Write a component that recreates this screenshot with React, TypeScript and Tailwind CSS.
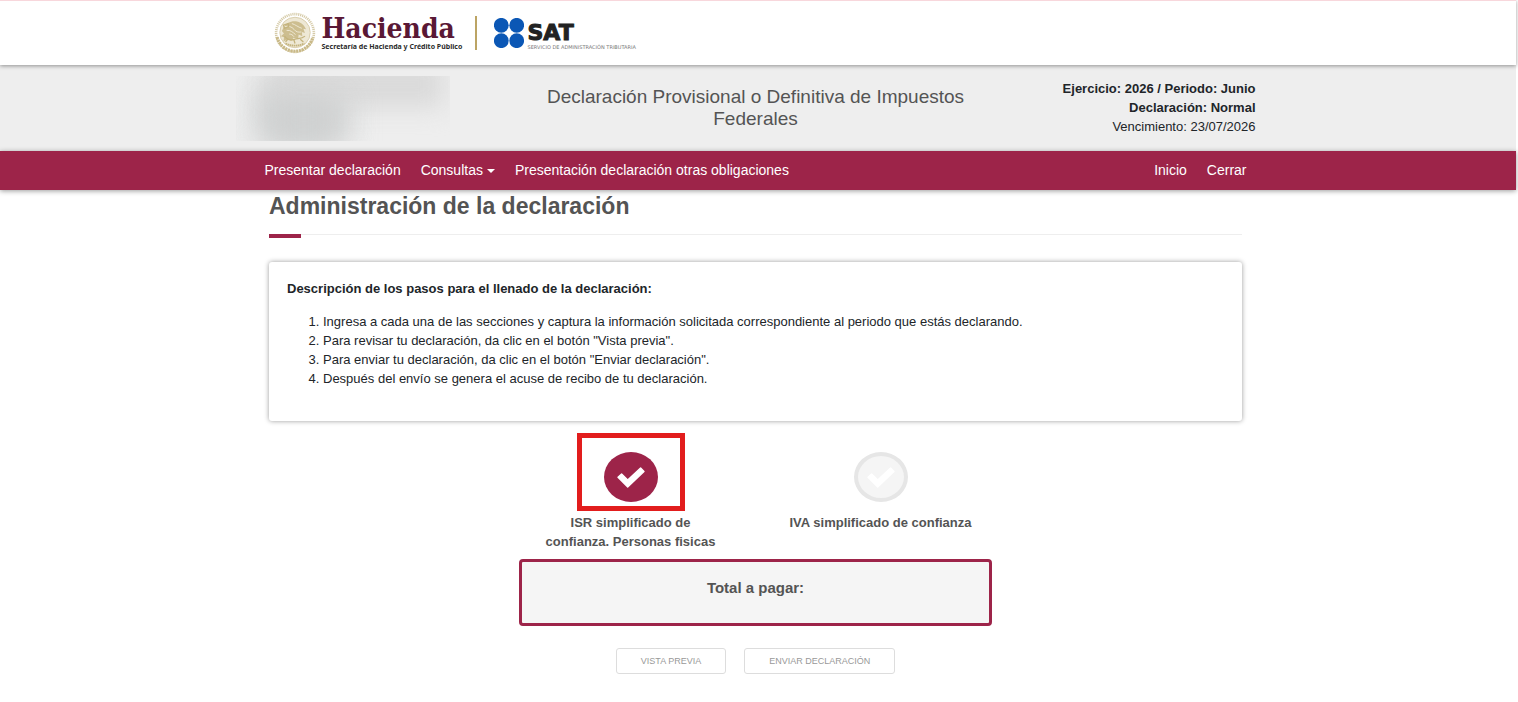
interface Step {
  id: string
  label: string
  active: boolean
}

const instructions = [
  "Ingresa a cada una de las secciones y captura la información solicitada correspondiente al periodo que estás declarando.",
  'Para revisar tu declaración, da clic en el botón "Vista previa".',
  'Para enviar tu declaración, da clic en el botón "Enviar declaración".',
  "Después del envío se genera el acuse de recibo de tu declaración.",
]

const steps: Step[] = [
  { id: "isr", label: "ISR simplificado de confianza. Personas fisicas", active: true },
  { id: "iva", label: "IVA simplificado de confianza", active: false },
]

function Seal() {
  return (
    <svg viewBox="0 0 80 80" className="h-[42px] w-[42px] shrink-0" fill="none" aria-hidden="true">
      <circle cx="40" cy="40" r="36" stroke="#d6cba8" strokeWidth="5" strokeDasharray="2.2 1.6" />
      <path d="M6 48a35 35 0 0 0 68 0" stroke="#c9b987" strokeWidth="6" strokeDasharray="4 1.4" />
      <circle cx="40" cy="39" r="29" fill="#eee8d5" stroke="#d2c69f" strokeWidth="1.5" />
      <path
        d="M18 30c5-10 16-14 26-12 9 2 14 8 17 15l-5-1 3 8-6-2 1 8-7-3-1 8-9-2-4 6-7-3-8 4 1-8-6-2 6-5-4-5z"
        fill="#cdbe90"
      />
      <path
        d="M20 28c8-2 14 0 18 5s8 6 14 5M24 35c8-1 12 4 17 8M34 22c7 2 12 7 19 9M29 42c4 0 7 2 9 5"
        stroke="#f3eede"
        strokeWidth="1.6"
      />
      <path
        d="M18 25l9-3 1 6-8 3zM20 46c5 7 12 8 19 6s14 0 20-6M26 52l-4 5M38 53l2 7M50 52l6 5"
        stroke="#c4b37d"
        strokeWidth="2.5"
      />
      <path d="M22 60q18 8 36 0" stroke="#c4b37d" strokeWidth="3.5" strokeDasharray="3 1" />
    </svg>
  )
}

function Logos() {
  return (
    <div className="flex items-center">
      <Seal />
      <div className="ml-[6px]">
        <div className="font-['DejaVu_Serif_Condensed','DejaVu_Serif'] text-[28px] font-bold leading-7 text-[#5a1835]">
          Hacienda
        </div>
        <div className="w-[137px] whitespace-nowrap font-['Noto_Sans'] text-[7px] font-bold leading-2 text-[#2b2b2b]">
          Secretaría de Hacienda y Crédito Público
        </div>
      </div>
      <div className="ml-4 h-[34px] w-[2px] bg-[#bca464]" />
      <svg viewBox="0 0 30 30" className="ml-[17px] h-[30px] w-[30px]" fill="#0b57b5" aria-hidden="true">
        <circle cx="7.3" cy="7.3" r="7.4" />
        <circle cx="22.7" cy="7.3" r="7.4" />
        <circle cx="7.3" cy="22.7" r="7.4" />
        <circle cx="22.7" cy="22.7" r="7.4" />
      </svg>
      <div className="ml-1 mt-1 text-[#222]">
        <div className="font-['DejaVu_Sans'] text-[22px] font-bold leading-6 [-webkit-text-stroke:1px_#222]">SAT</div>
        <div className="whitespace-nowrap font-['DejaVu_Sans'] text-[5px] leading-1 text-[#777]">
          SERVICIO DE ADMINISTRACIÓN TRIBUTARIA
        </div>
      </div>
    </div>
  )
}

function CheckMark() {
  return (
    <svg viewBox="0 0 28 21" className="h-[21px] w-7" fill="currentColor" stroke="currentColor" aria-hidden="true">
      <path d="M1 10.2L4.6 7l6.1 6L23.6 1 27 4.4 10.7 20z" strokeWidth="1.4" strokeLinejoin="round" />
    </svg>
  )
}

function StepButton({ step }: { step: Step }) {
  return (
    <button type="button" className="flex w-[250px] cursor-pointer flex-col items-center">
      <span
        className={`flex h-[78px] w-[108px] items-center justify-center border-5 pt-[10px] ${
          step.active ? "border-[#e21d1d]" : "border-transparent"
        }`}
      >
        <span
          className={`flex h-[50px] w-[54px] items-center justify-center rounded-[50%] text-white ${
            step.active ? "bg-[#9d2449]" : "border-4 border-[#e6e6e6] bg-[#f5f5f5]"
          }`}
        >
          <CheckMark />
        </span>
      </span>
      <span className="mt-[2px] w-48 text-balance text-[13px] font-bold leading-[19px] text-[#545454]">{step.label}</span>
    </button>
  )
}

export default function App() {
  return (
    <div className="mr-[2px] bg-white pb-6 font-['Liberation_Sans',Arial,sans-serif] text-[13px] leading-[19px] text-[#212529]">
      {/* Logos */}
      <header className="relative z-10 border-t border-[#f8d7dc] bg-white pr-[5px] shadow-[0_1px_4px_rgba(0,0,0,0.4)]">
        <div className="mx-auto flex h-16 max-w-[1000px] items-center pl-[18px]">
          <Logos />
        </div>
      </header>

      {/* Declaration summary */}
      <section className="bg-[#eeeeee] pr-[5px]">
        <div className="mx-auto grid h-[86px] max-w-[1000px] grid-cols-[1fr_2fr_1fr] items-center">
          <div className="relative -ml-5 h-[65px] w-[214px] overflow-hidden">
            <div className="absolute left-6 top-1 h-16 w-20 bg-[#d0d2d2] blur-lg" />
            <div className="absolute -top-4 left-8 h-12 w-44 bg-[#dadada] blur-md" />
            <div className="absolute left-7 top-5 h-12 w-20 bg-[#cfd1d1] blur-lg" />
          </div>
          <h1 className="px-8 text-center text-[19px] leading-[22px] text-[#545454]">
            Declaración Provisional o Definitiva de Impuestos Federales
          </h1>
          <div className="pb-[2px] text-right">
            <p className="font-bold">Ejercicio: 2026 / Periodo: Junio</p>
            <p className="font-bold">Declaración: Normal</p>
            <p>Vencimiento: 23/07/2026</p>
          </div>
        </div>
      </section>

      {/* Main menu */}
      <nav className="relative bg-[#9d2449] pr-[5px] text-[14px] text-white shadow-[0_1px_5px_rgba(0,0,0,0.4)]">
        <div className="mx-auto flex h-[39px] max-w-[982px] items-center gap-5">
          <a href="#presentar">Presentar declaración</a>
          <button type="button" className="flex cursor-pointer items-center gap-1">
            Consultas
            <span className="border-x-4 border-t-4 border-x-transparent border-t-white" />
          </button>
          <a href="#otras">Presentación declaración otras obligaciones</a>
          <a href="#inicio" className="ml-auto">
            Inicio
          </a>
          <a href="#cerrar">Cerrar</a>
        </div>
      </nav>

      <main className="pr-[5px]">
        <div className="mx-auto max-w-[973px]">
          <h2 className="pt-1 text-[23px] font-bold leading-6 text-[#545454]">Administración de la declaración</h2>
          <div className="mt-4 h-1 border-t border-[#eeeeee]">
            <div className="-mt-px h-1 w-8 bg-[#9d2449]" />
          </div>

          <div className="mt-6 rounded-[3px] px-[18px] pb-[33px] pt-[17px] shadow-[0_0_5px_rgba(0,0,0,0.4)]">
            <p className="font-bold">Descripción de los pasos para el llenado de la declaración:</p>
            <ol className="mt-[14px] list-decimal pl-9">
              {instructions.map((text) => (
                <li key={text}>{text}</li>
              ))}
            </ol>
          </div>

          <div className="mt-3 flex justify-center">
            {steps.map((step) => (
              <StepButton key={step.id} step={step} />
            ))}
          </div>

          <div className="mx-auto mt-2 h-[67px] max-w-[473px] rounded-[4px] border-3 border-[#9d2449] bg-[#f5f5f5] pt-4 text-center text-[15px] font-bold leading-5 text-[#545454]">
            Total a pagar:
          </div>

          <div className="mt-[22px] flex justify-center gap-[18px] text-[9px] leading-4 text-[#999999]">
            <button type="button" className="h-[26px] rounded-[3px] border border-[#dddddd] px-6">
              VISTA PREVIA
            </button>
            <button type="button" className="h-[26px] rounded-[3px] border border-[#dddddd] px-6">
              ENVIAR DECLARACIÓN
            </button>
          </div>
        </div>
      </main>
    </div>
  )
}
